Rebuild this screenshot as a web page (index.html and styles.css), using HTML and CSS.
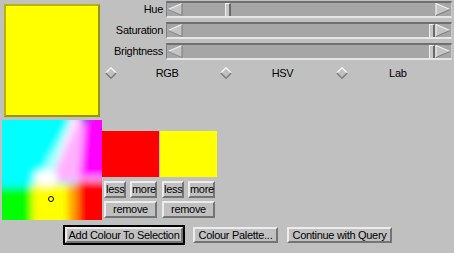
FILE: index.html
```html
<!DOCTYPE html>
<html>
<head>
<meta charset="utf-8">
<link rel="stylesheet" href="styles.css">
</head>
<body>
<div class="app">
  <div class="top">
    <div class="current"></div>
    <div class="controls">
      <div class="srow">
        <span class="slabel">Hue</span>
        <div class="trough">
          <svg class="arrow" viewBox="0 0 16 13"><polygon points="1,6.5 15,0.5 15,12.5" fill="#c4c4c4"/><path d="M1,6.5 L15,0.5" stroke="#f0f0f0" stroke-width="1.2"/><path d="M1,6.5 L15,12.5" stroke="#8a8a8a" stroke-width="1"/><path d="M15,0.5 L15,12.5" stroke="#7a7a7a" stroke-width="1"/></svg>
          <span class="spacer-fixed" style="width:42px"></span>
          <span class="thumb"></span>
          <span class="spacer"></span>
          <svg class="arrow" viewBox="0 0 16 13"><polygon points="15,6.5 1,0.5 1,12.5" fill="#c4c4c4"/><path d="M1,12.5 L1,0.5 L15,6.5" stroke="#f0f0f0" stroke-width="1.2" fill="none"/><path d="M15,6.5 L1,12.5" stroke="#7a7a7a" stroke-width="1"/></svg>
        </div>
      </div>
      <div class="srow">
        <span class="slabel">Saturation</span>
        <div class="trough">
          <svg class="arrow" viewBox="0 0 16 13"><polygon points="1,6.5 15,0.5 15,12.5" fill="#c4c4c4"/><path d="M1,6.5 L15,0.5" stroke="#f0f0f0" stroke-width="1.2"/><path d="M1,6.5 L15,12.5" stroke="#8a8a8a" stroke-width="1"/><path d="M15,0.5 L15,12.5" stroke="#7a7a7a" stroke-width="1"/></svg>
          <span class="spacer"></span>
          <span class="thumb"></span>
          <svg class="arrow" viewBox="0 0 16 13"><polygon points="15,6.5 1,0.5 1,12.5" fill="#c4c4c4"/><path d="M1,12.5 L1,0.5 L15,6.5" stroke="#f0f0f0" stroke-width="1.2" fill="none"/><path d="M15,6.5 L1,12.5" stroke="#7a7a7a" stroke-width="1"/></svg>
        </div>
      </div>
      <div class="srow">
        <span class="slabel">Brightness</span>
        <div class="trough">
          <svg class="arrow" viewBox="0 0 16 13"><polygon points="1,6.5 15,0.5 15,12.5" fill="#c4c4c4"/><path d="M1,6.5 L15,0.5" stroke="#f0f0f0" stroke-width="1.2"/><path d="M1,6.5 L15,12.5" stroke="#8a8a8a" stroke-width="1"/><path d="M15,0.5 L15,12.5" stroke="#7a7a7a" stroke-width="1"/></svg>
          <span class="spacer"></span>
          <span class="thumb"></span>
          <svg class="arrow" viewBox="0 0 16 13"><polygon points="15,6.5 1,0.5 1,12.5" fill="#c4c4c4"/><path d="M1,12.5 L1,0.5 L15,6.5" stroke="#f0f0f0" stroke-width="1.2" fill="none"/><path d="M15,6.5 L1,12.5" stroke="#7a7a7a" stroke-width="1"/></svg>
        </div>
      </div>
      <div class="radios">
        <div class="radio">
          <svg class="diamond" viewBox="0 0 12 12"><polygon points="6,0.5 11.5,6 6,11.5 0.5,6" fill="#c0c0c0"/><path d="M0.8,6 L6,0.8 L11.2,6" stroke="#f4f4f4" stroke-width="1.4" fill="none"/><path d="M0.8,6 L6,11.2 L11.2,6" stroke="#7a7a7a" stroke-width="1.4" fill="none"/></svg>
          <span class="rlabel">RGB</span>
        </div>
        <div class="radio">
          <svg class="diamond" viewBox="0 0 12 12"><polygon points="6,0.5 11.5,6 6,11.5 0.5,6" fill="#c0c0c0"/><path d="M0.8,6 L6,0.8 L11.2,6" stroke="#f4f4f4" stroke-width="1.4" fill="none"/><path d="M0.8,6 L6,11.2 L11.2,6" stroke="#7a7a7a" stroke-width="1.4" fill="none"/></svg>
          <span class="rlabel">HSV</span>
        </div>
        <div class="radio">
          <svg class="diamond" viewBox="0 0 12 12"><polygon points="6,0.5 11.5,6 6,11.5 0.5,6" fill="#c0c0c0"/><path d="M0.8,6 L6,0.8 L11.2,6" stroke="#f4f4f4" stroke-width="1.4" fill="none"/><path d="M0.8,6 L6,11.2 L11.2,6" stroke="#7a7a7a" stroke-width="1.4" fill="none"/></svg>
          <span class="rlabel">Lab</span>
        </div>
      </div>
    </div>
  </div>
  <div class="mid">
    <div class="picker">
      <svg width="100" height="100" viewBox="0 0 100 100">
        <defs>
          <filter id="bl" filterUnits="userSpaceOnUse" x="-30" y="-30" width="160" height="160"><feGaussianBlur stdDeviation="3.5"/></filter>
        </defs>
        <g filter="url(#bl)">
          <rect x="-30" y="-30" width="160" height="160" fill="#00ffff"/>
          <polygon points="77,-30 130,-30 130,60 50,62" fill="#ffb0ff"/>
          <polygon points="84,-30 130,-30 130,57 78,57 81,20" fill="#ff00ff"/>
          <polygon points="76,-30 90,-30 87,3 80,3" fill="#3a3aff"/>
          <polygon points="32,66 52,54 78,-2 70,-2" fill="#ffffff" opacity="0.7"/>
          <rect x="-30" y="67" width="60" height="63" fill="#00ff00"/>
          <rect x="30" y="64" width="38" height="66" fill="#ffff00"/>
          <rect x="66" y="64" width="10" height="66" fill="#ffa000"/>
          <rect x="76" y="61" width="54" height="69" fill="#ff0000"/>
          <ellipse cx="44" cy="58" rx="12" ry="8" fill="#ffffff"/>
        </g>
        <circle cx="49" cy="79" r="2.5" fill="none" stroke="#000" stroke-width="1"/>
      </svg>
    </div>
    <div class="swatches">
      <div class="swcol">
        <div class="swatch red"></div>
        <div class="btnrow"><button class="btn b-less">less</button><button class="btn b-more">more</button></div>
        <button class="btn remove">remove</button>
      </div>
      <div class="swcol">
        <div class="swatch yellow"></div>
        <div class="btnrow"><button class="btn b-less">less</button><button class="btn b-more">more</button></div>
        <button class="btn remove">remove</button>
      </div>
    </div>
  </div>
  <div class="actions">
    <div class="default"><button class="btn b-add">Add Colour To Selection</button></div>
    <button class="btn b-pal">Colour Palette...</button>
    <button class="btn b-cont">Continue with Query</button>
  </div>
</div>
</body>
</html>
```

FILE: styles.css
```css
body {
  margin: 0;
  background: #c0c0c0;
  font-family: "Liberation Sans", Arial, sans-serif;
  font-size: 11px;
  letter-spacing: -0.3px;
  color: #000;
}

.app {
  width: 454px;
  height: 253px;
}

.top {
  display: flex;
  height: 120px;
}

.current {
  box-sizing: border-box;
  width: 96px;
  height: 113px;
  margin: 4px 0 0 4px;
  background: #ffff00;
  border: 2px solid;
  border-color: #b4b400 #959500 #959500 #b4b400;
}

.controls {
  margin-left: 2px;
  width: 350px;
  padding-top: 1px;
  display: flex;
  flex-direction: column;
  gap: 4px;
}

.srow {
  display: flex;
  height: 17px;
}

.slabel {
  width: 64px;
  box-sizing: border-box;
  padding-right: 3px;
  text-align: right;
  line-height: 17px;
}

.trough {
  box-sizing: border-box;
  width: 286px;
  height: 17px;
  display: flex;
  background: #a6a6a6;
  border-top: 2px solid #707070;
  border-bottom: 2px solid #e6e6e6;
  border-left: 1px solid #808080;
  border-right: 1px solid #c8c8c8;
}

.arrow {
  display: block;
  flex: none;
  width: 16px;
  height: 13px;
}

.spacer {
  flex: 1;
}

.spacer-fixed {
  flex: none;
}

.thumb {
  flex: none;
  width: 6px;
  box-sizing: border-box;
  background: #c6c6c6;
  border-left: 1px solid #f0f0f0;
  border-top: 1px solid #f0f0f0;
  border-right: 2px solid #6a6a6a;
}

.radios {
  display: flex;
  width: 346px;
  height: 18px;
}

.radio {
  flex: 1;
  display: flex;
  align-items: center;
}

.diamond {
  display: block;
  flex: none;
  width: 12px;
  height: 12px;
  margin-left: 3px;
}

.rlabel {
  flex: 1;
  text-align: center;
}

.mid {
  display: flex;
  height: 105px;
}

.picker {
  margin-left: 2px;
  width: 100px;
  height: 100px;
}

.picker svg {
  display: block;
}

.swatches {
  display: flex;
  gap: 1px;
  margin-top: 11px;
}

.swcol {
  width: 57px;
  display: flex;
  flex-direction: column;
}

.swatch {
  height: 46px;
}

.red {
  background: #ff0000;
}

.yellow {
  background: #ffff00;
}

.btnrow {
  display: flex;
  gap: 4px;
  padding-left: 2px;
  margin-top: 4px;
}

.btn {
  font: inherit;
  letter-spacing: inherit;
  color: #000;
  background: #c0c0c0;
  border: 2px solid;
  border-color: #ececec #747474 #747474 #ececec;
  padding: 0;
  margin: 0;
  height: 17px;
  box-sizing: border-box;
  line-height: 13px;
  white-space: nowrap;
  overflow: visible;
}

.b-less {
  width: 22px;
}

.b-more {
  width: 27px;
}

.remove {
  width: 53px;
  margin: 3px 0 0 2px;
}

.actions {
  display: flex;
  align-items: center;
  padding-left: 63px;
  height: 20px;
}

.default {
  display: flex;
  border: 2px solid #000;
}

.b-add {
  width: 118px;
  height: 16px;
}

.b-pal {
  width: 85px;
  height: 16px;
  margin-left: 8px;
}

.b-cont {
  width: 105px;
  height: 16px;
  margin-left: 9px;
}
```
